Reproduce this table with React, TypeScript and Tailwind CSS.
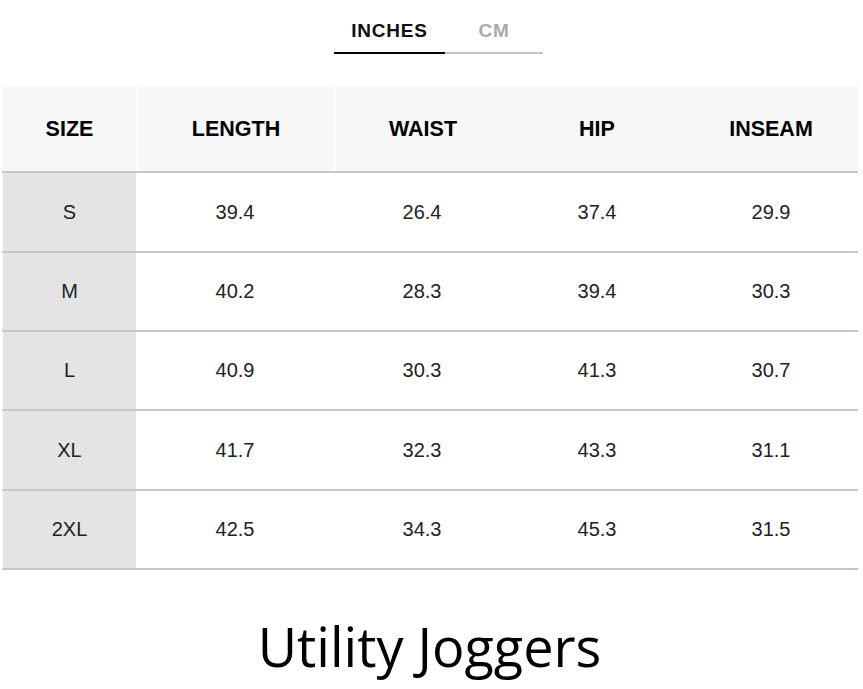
const rows = [
  ["S", "39.4", "26.4", "37.4", "29.9"],
  ["M", "40.2", "28.3", "39.4", "30.3"],
  ["L", "40.9", "30.3", "41.3", "30.7"],
  ["XL", "41.7", "32.3", "43.3", "31.1"],
  ["2XL", "42.5", "34.3", "45.3", "31.5"],
];

const heights = ["h-[80px]", "h-[79px]", "h-[79px]", "h-[80px]", "h-[81px] border-b-2"];

const cols = "grid grid-cols-[133px_198px_176px_174px_174px]";

export default function App() {
  return (
    <div className="w-[863px] h-[689px] bg-white font-['Liberation_Sans',Arial,sans-serif] text-black overflow-hidden">
      <div className="flex justify-center pt-[17px] pl-[14px]">
        <div className="flex">
          <div className="w-[111px] flex justify-center pb-[6px] border-b-2 border-black text-[19px] font-bold tracking-[0.8px] text-[#111]">
            INCHES
          </div>
          <div className="w-[98px] flex justify-center pb-[6px] border-b-2 border-[#c4c4c4] text-[19px] font-bold tracking-[0.8px] text-[#aaaaaa]">
            CM
          </div>
        </div>
      </div>

      <div className="mt-[32px] ml-[2px] w-[856px]">
        <div className={`${cols} h-[85px] pl-[1px]`}>
          {["SIZE", "LENGTH", "WAIST", "HIP", "INSEAM"].map((h, i) => (
            <div
              key={h}
              className={`flex items-center justify-center pt-[3px] bg-[#f7f7f7] text-[21.5px] font-bold ${
                i === 1 || i === 2 ? "border-l-2 border-white" : ""
              }`}
            >
              {h}
            </div>
          ))}
        </div>
        {rows.map((r, ri) => (
          <div
            key={r[0]}
            className={`${cols} ${heights[ri]} border-t-2 border-[#c3c8ca] pl-[1px]`}
          >
            {r.map((c, i) => (
              <div
                key={i}
                className={`flex items-center justify-center text-[20px] text-[#222] ${
                  i === 0 ? "bg-[#e4e4e4]" : ""
                }`}
              >
                {c}
              </div>
            ))}
          </div>
        ))}
      </div>

      <div className="mt-[49px] flex justify-center pr-[4px] font-['Open_Sans',sans-serif] text-[54px] leading-none text-black">
        Utility Joggers
      </div>
    </div>
  );
}
